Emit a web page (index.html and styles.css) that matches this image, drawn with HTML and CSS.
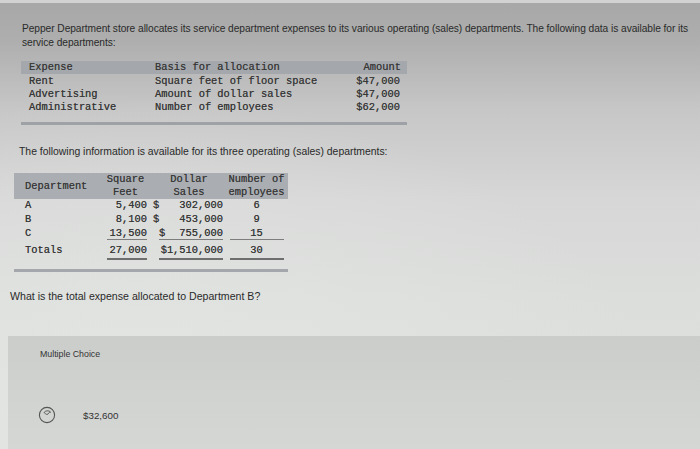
FILE: index.html
```html
<!DOCTYPE html>
<html>
<head>
<meta charset="utf-8">
<link rel="stylesheet" href="styles.css">
</head>
<body>
<div class="page">
  <p class="intro">Pepper Department store allocates its service department expenses to its various operating (sales) departments. The following data is available for its service departments:</p>

  <table class="t1">
    <thead>
      <tr><th class="c1">Expense</th><th class="c2">Basis for allocation</th><th class="c3">Amount</th></tr>
    </thead>
    <tbody>
      <tr><td class="c1">Rent</td><td class="c2">Square feet of floor space</td><td class="c3">$47,000</td></tr>
      <tr><td class="c1">Advertising</td><td class="c2">Amount of dollar sales</td><td class="c3">$47,000</td></tr>
      <tr><td class="c1">Administrative</td><td class="c2">Number of employees</td><td class="c3">$62,000</td></tr>
    </tbody>
  </table>

  <p class="info">The following information is available for its three operating (sales) departments:</p>

  <table class="t2">
    <thead>
      <tr><th class="d1">Department</th><th class="d2">Square<br>Feet</th><th class="d3">Dollar<br>Sales</th><th class="d4">Number of<br>employees</th></tr>
    </thead>
    <tbody>
      <tr><td class="d1">A</td><td class="d2">5,400</td><td class="d3"><span class="dol">$</span>302,000</td><td class="d4">6</td></tr>
      <tr><td class="d1">B</td><td class="d2">8,100</td><td class="d3"><span class="dol">$</span>453,000</td><td class="d4">9</td></tr>
      <tr class="last"><td class="d1">C</td><td class="d2"><span class="ul u2">13,500</span></td><td class="d3"><span class="ul u3"><span class="dol">$</span>755,000</span></td><td class="d4"><span class="ul u4">15</span></td></tr>
      <tr class="tot"><td class="d1">Totals</td><td class="d2"><span class="dl u2">27,000</span></td><td class="d3"><span class="dl u3">$1,510,000</span></td><td class="d4"><span class="dl u4">30</span></td></tr>
    </tbody>
  </table>

  <p class="q">What is the total expense allocated to Department B?</p>

  <section class="mc">
    <div class="mc-label">Multiple Choice</div>
    <div class="opt">
      <span class="radio"><svg width="18" height="18" viewBox="0 0 18 18"><circle cx="9" cy="9" r="7.6" fill="none" stroke="#555" stroke-width="1.1"/><path d="M6 6.5 C7.5 4.5 11 4.2 12.6 6.2 C11.8 6 11 6.4 10.6 7.2 C10 8.6 8.6 8.8 7.6 7.8 C7 7.2 6.5 6.8 6 6.5 Z" fill="none" stroke="#555" stroke-width="1"/></svg></span>
      <span class="opt-text">$32,600</span>
    </div>
  </section>
</div>
</body>
</html>
```

FILE: styles.css
```css
html, body {
  margin: 0;
  padding: 0;
}
body {
  width: 700px;
  height: 449px;
  overflow: hidden;
  background:
    radial-gradient(ellipse 520px 330px at 20% 95%, rgba(228,230,228,0.9), rgba(228,230,228,0) 100%),
    linear-gradient(180deg, #a6a7a6 0px, #adaead 40px, #c6c7c6 110px, #d6d7d6 200px, #dcdedc 300px, #dfe1df 449px);
  border-top: 3px solid #d2d2d2;
  box-sizing: border-box;
  font-family: "Liberation Sans", Arial, sans-serif;
  color: #2a2a2a;
}
.page {
  padding: 19px 0 0 0;
  height: 446px;
  box-sizing: border-box;
  display: flex;
  flex-direction: column;
  align-items: flex-start;
}
.intro {
  margin: 0 0 0 22px;
  width: 672px;
  font-size: 10.2px;
  line-height: 13.5px;
  letter-spacing: -0.05px;
}

.t1, .t2 {
  border-collapse: collapse;
  font-family: "Liberation Mono", "Courier New", monospace;
  font-size: 10.4px;
  color: #383838;
  font-weight: normal;
  text-shadow: 0 0 0.4px #555;
}
.t1 {
  margin: 12px 0 0 21px;
  width: 386px;
  border-bottom: 3px solid #9ea2a6;
}
.t1 th {
  font-weight: normal;
  background: #a4a8ac;
  height: 13px;
  line-height: 13px;
  padding: 0;
  text-align: left;
}
.t1 td {
  height: 13px;
  line-height: 13px;
  padding: 0;
}
.t1 tbody tr:first-child td { padding-top: 1px; }
.t1 tbody tr:last-child td {
  padding-bottom: 8px;
}
.t1 .c1 { width: 126px; padding-left: 8px; }
.t1 .c2 { width: 200px; }
.t1 .c3 { text-align: right; padding-right: 7px; }
.t1 th.c3 { padding-right: 6px; text-align: right; }

.info {
  margin: 20px 0 0 19px;
  font-size: 10.4px;
  line-height: 13px;
}

.t2 {
  margin: 15px 0 0 14px;
  width: 274px;
  border-bottom: 3px solid #a4a8ac;
}
.t2 th {
  font-weight: normal;
  background: #aaaeb2;
  line-height: 13px;
  padding: 0;
  height: 26px;
}
.t2 td {
  height: 13.5px;
  line-height: 13.5px;
  padding: 0;
}
.t2 .d1 { width: 75px; padding-left: 11px; text-align: left; }
.t2 .d2 { width: 47px; text-align: right; padding-right: 4px; }
.t2 th.d2 { text-align: center; padding-right: 0; padding-left: 0; }
.t2 .d3 { width: 68px; text-align: right; padding-right: 2px; }
.t2 th.d3 { text-align: center; padding-left: 4px; }
.t2 .d4 { text-align: center; }
.dol { float: left; padding-left: 2px; }

.ul, .dl { display: inline-block; box-sizing: border-box; }
.ul { border-bottom: 1px solid #7d7d7d; line-height: 12px; }
.dl { border-bottom: 2px solid #6e6e6e; line-height: 13px; padding-bottom: 1px; }
.u2 { width: 40px; text-align: right; }
.u3 { width: 64px; text-align: right; }
.u3 .dol { padding-left: 0; }
.u4 { width: 54px; text-align: center; }
.t2 tr.last td { height: 14px; vertical-align: bottom; }
.t2 tr.tot td { height: 16px; vertical-align: top; padding-top: 4px; padding-bottom: 9px; }

.q {
  margin: 18px 0 0 10px;
  font-size: 10.6px;
  line-height: 13px;
}

.mc {
  align-self: stretch;
  flex: 1;
  margin: 33px 0 0 8px;
  background: linear-gradient(180deg, #cbcdcb 0px, #d1d3d1 60px, #d5d7d5 115px);
}
.mc-label {
  margin: 12px 0 0 32px;
  font-size: 8.8px;
  line-height: 12px;
  color: #333;
}
.opt {
  display: flex;
  align-items: center;
  margin: 46px 0 0 30px;
}
.radio {
  display: inline-flex;
  width: 18px;
  height: 18px;
}
.opt-text {
  margin-left: 27px;
  font-size: 9.8px;
  color: #333;
}
```
